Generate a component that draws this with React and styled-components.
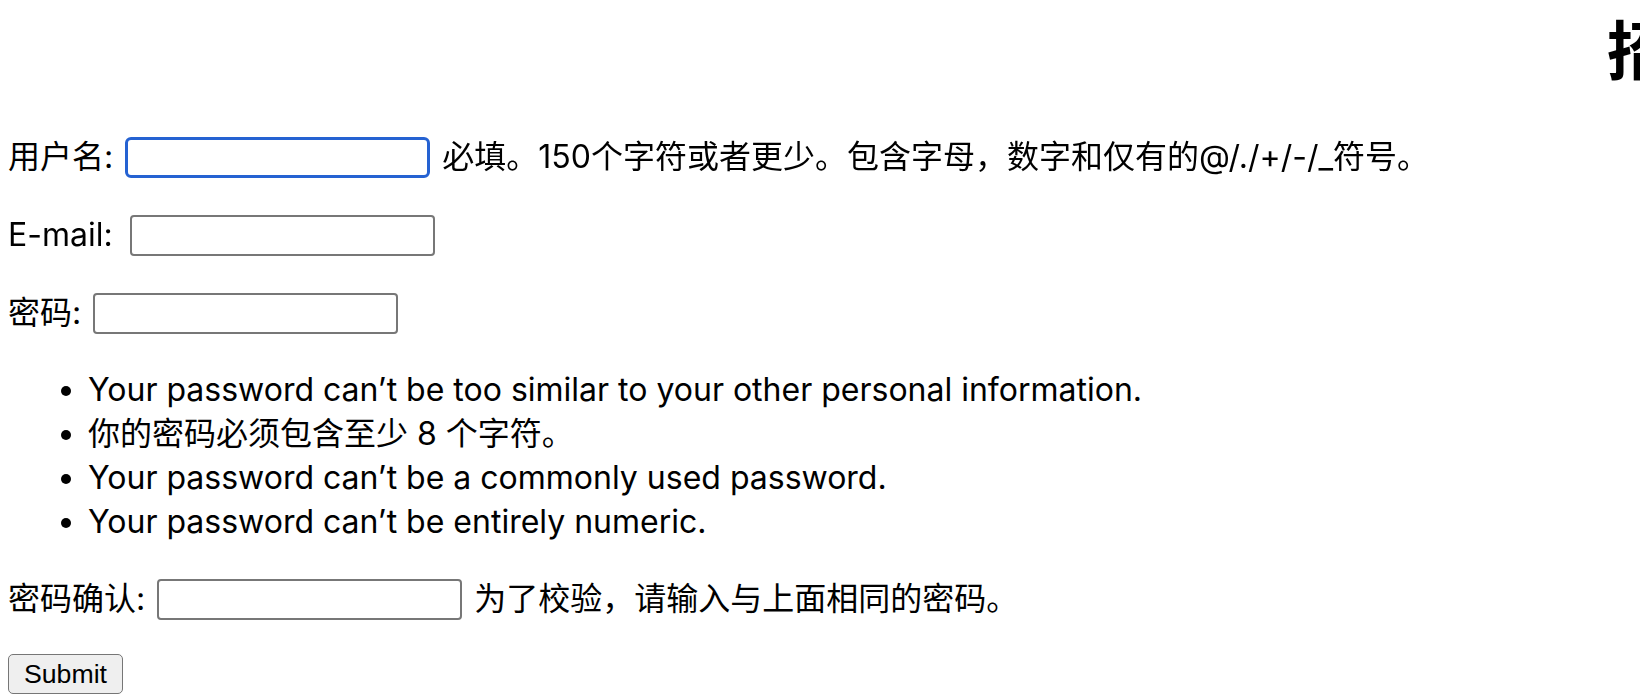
import React from 'react';
import styled, { createGlobalStyle } from 'styled-components';

const GlobalStyle = createGlobalStyle`
  html {
    overflow: hidden;
    background: #fff;
  }
  body {
    margin: 8px 8px 0;
    color: #000;
    font-family: Inter, "Noto Sans CJK SC", sans-serif;
    font-size: 32px;
  }
`;

const Header = styled.header`
  display: flex;
  margin-right: -8px;
  padding-left: 1599px;
  padding-bottom: 18px;
  overflow: hidden;
  white-space: nowrap;
`;

const Title = styled.h1`
  flex-shrink: 0;
  margin: 0;
  font-family: "Noto Sans CJK SC", sans-serif;
  font-size: 64px;
  font-weight: 700;
  line-height: 76px;
`;

const Row = styled.p`
  display: flex;
  align-items: center;
  gap: 12px;
  height: 46px;
  margin: 32px 0;
  line-height: 46px;
  white-space: nowrap;
`;

const Label = styled.label`
  display: block;
  margin-right: ${(p) => (p.$wide ? '5px' : '0')};
`;

const HelpText = styled.span`
  display: block;
`;

const TextInput = styled.input`
  box-sizing: border-box;
  width: 305px;
  height: 41px;
  padding: 0 6px;
  border: 2px solid #777;
  border-radius: 4px;
  background: #fff;
  font-family: "Liberation Sans", Arial, sans-serif;
  font-size: 26px;
  caret-color: #000;

  &:focus {
    outline: none;
    border: 3px solid #2562d2;
    border-radius: 6px;
  }
`;

const Rules = styled.ul`
  margin: 32px 0;
  padding-left: 80px;

  li {
    line-height: 44px;
    white-space: nowrap;
  }
`;

const SubmitRow = styled.div`
  display: flex;
  margin: 32px 0 0;
`;

const SubmitButton = styled.button`
  height: 40px;
  padding: 0 15px;
  border: 1px solid #767676;
  border-radius: 5px;
  background: #efefef;
  color: #000;
  font-family: "Liberation Sans", Arial, sans-serif;
  font-size: 26.67px;
`;

const fields = [
  { id: 'username', label: '用户名:', type: 'text', help: '必填。150个字符或者更少。包含字母，数字和仅有的@/./+/-/_符号。', focus: true },
  { id: 'email', label: 'E-mail:', type: 'email', wide: true },
  { id: 'password1', label: '密码:', type: 'password' },
];

const rules = [
  'Your password can’t be too similar to your other personal information.',
  '你的密码必须包含至少 8 个字符。',
  'Your password can’t be a commonly used password.',
  'Your password can’t be entirely numeric.',
];

const App = () => {
  return (
    <>
      <GlobalStyle />
      <Header>
        <Title>招聘网站</Title>
      </Header>
      <form onSubmit={(e) => e.preventDefault()}>
        {fields.map((f) => (
          <Row key={f.id}>
            <Label htmlFor={f.id} $wide={f.wide}>{f.label}</Label>
            <TextInput id={f.id} name={f.id} type={f.type} autoFocus={f.focus} />
            {f.help && <HelpText>{f.help}</HelpText>}
          </Row>
        ))}
        <Rules>
          {rules.map((r) => <li key={r}>{r}</li>)}
        </Rules>
        <Row>
          <Label htmlFor="password2">密码确认:</Label>
          <TextInput id="password2" name="password2" type="password" />
          <HelpText>为了校验，请输入与上面相同的密码。</HelpText>
        </Row>
        <SubmitRow>
          <SubmitButton type="submit">Submit</SubmitButton>
        </SubmitRow>
      </form>
    </>
  );
};

export default App;
